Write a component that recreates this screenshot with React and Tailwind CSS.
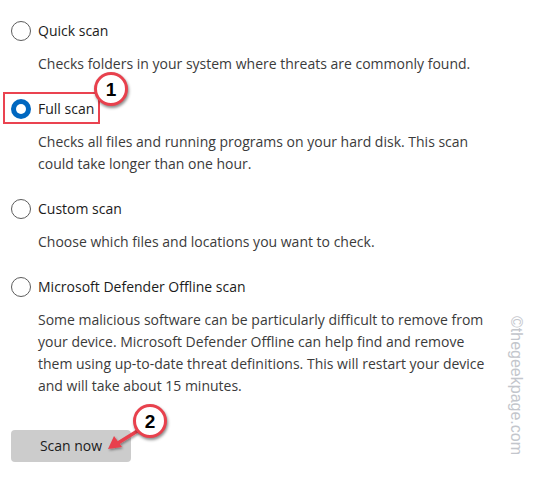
import React from "react";

function Radio({ checked }) {
  if (checked) {
    return (
      <span className="w-5 h-5 rounded-full bg-[#0067c0] flex items-center justify-center shrink-0">
        <span className="w-[10px] h-[10px] rounded-full bg-white" />
      </span>
    );
  }
  return <span className="w-5 h-5 rounded-full border border-[#5c5c5c] bg-white shrink-0" />;
}

function Option({ checked, label, children, className = "" }) {
  return (
    <div className={className}>
      <div className="flex items-center h-[22px] pl-[11px] gap-[7px]">
        <Radio checked={checked} />
        <span className="text-[#1b1b1b]">{label}</span>
      </div>
      <div className="mt-[11px] pl-[38px] text-[#3b3b3b]">{children}</div>
    </div>
  );
}

function Badge({ n, className }) {
  return (
    <div
      className={
        "absolute w-[34px] h-[34px] rounded-full bg-white border-[3px] border-[#e8414d] flex items-center justify-center shadow-[1px_2px_3px_rgba(0,0,0,0.45)] " +
        className
      }
    >
      <span className="text-[19px] font-bold text-black leading-none" style={{ fontFamily: '"Liberation Sans", Arial, sans-serif' }}>
        {n}
      </span>
    </div>
  );
}

export default function App() {
  return (
    <div
      className="relative w-[537px] h-[478px] bg-white overflow-hidden text-[14px] leading-[22px]"
      style={{ fontFamily: '"Open Sans", "Noto Sans", sans-serif' }}
    >
      <div className="pt-[20px] flex flex-col gap-[23px]">
        <Option label="Quick scan">Checks folders in your system where threats are commonly found.</Option>
        <Option checked label="Full scan">
          Checks all files and running programs on your hard disk. This scan
          <br />
          could take longer than one hour.
        </Option>
        <Option label="Custom scan">Choose which files and locations you want to check.</Option>
        <Option label="Microsoft Defender Offline scan">
          Some malicious software can be particularly difficult to remove from
          <br />
          your device. Microsoft Defender Offline can help find and remove
          <br />
          them using up-to-date threat definitions. This will restart your device
          <br />
          and will take about 15 minutes.
        </Option>
      </div>
      <div className="mt-[33px] ml-[11px] w-[120px] h-[32px] rounded-[4px] bg-[#cccccc] flex items-center justify-center text-[#1b1b1b]">
        Scan now
      </div>

      {/* annotations */}
      <div className="absolute left-[3px] top-[92px] w-[97px] h-[32px] border-2 border-[#ea4350]" />
      <Badge n="1" className="left-[94px] top-[72px]" />
      <svg className="absolute left-0 top-0" width="537" height="478">
        <defs>
          <filter id="sh" x="-20%" y="-20%" width="140%" height="140%">
            <feDropShadow dx="1" dy="1.5" stdDeviation="1" floodOpacity="0.4" />
          </filter>
        </defs>
        <g filter="url(#sh)">
          <line x1="139" y1="430" x2="118" y2="443" stroke="#e8414d" strokeWidth="3.5" strokeLinecap="round" />
          <polygon points="108,449 114,436 122,447" fill="#e8414d" />
        </g>
      </svg>
      <Badge n="2" className="left-[133px] top-[404px]" />

      <div
        className="absolute left-[507px] top-[316px] text-[16px] leading-[18px] text-[#c3c6cc] whitespace-nowrap origin-top-left rotate-90 translate-x-[18px]"
        style={{ fontFamily: '"Liberation Sans", Arial, sans-serif' }}
      >
        ©thegeekpage.com
      </div>
    </div>
  );
}
